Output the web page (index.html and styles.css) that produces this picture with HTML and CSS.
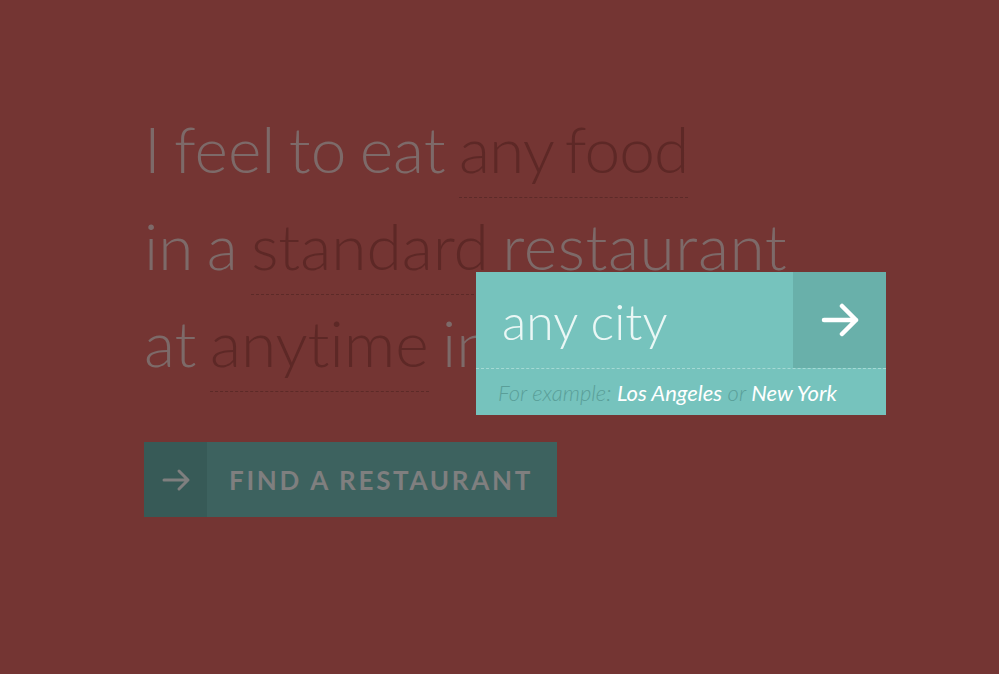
FILE: index.html
```html
<!DOCTYPE html>
<html>
<head>
<meta charset="utf-8">
<link rel="stylesheet" href="styles.css">
</head>
<body>
<div class="page">
  <div class="sentence">
    <div class="line">I feel to eat <span class="pick pick-tight">any food</span></div>
    <div class="line">in a <span class="pick">standard</span> <span class="wide">restaurant</span></div>
    <div class="line">at <span class="pick">anytime</span> in</div>
  </div>
  <div class="find">
    <span class="find-icon">
      <svg width="30" height="24" viewBox="0 0 30 24"><path d="M3 12 H27 M18 3 L27 12 L18 21" fill="none" stroke="#7f7f7f" stroke-width="3" stroke-linecap="round" stroke-linejoin="round"/></svg>
    </span>
    <span class="find-label">FIND A RESTAURANT</span>
  </div>
</div>
<div class="popup">
  <div class="popup-row">
    <div class="popup-input">any city</div>
    <div class="popup-go">
      <svg width="40" height="34" viewBox="0 0 40 34"><path d="M4 17 H36 M22 3 L36 17 L22 31" fill="none" stroke="#ffffff" stroke-width="4.5" stroke-linecap="round" stroke-linejoin="round"/></svg>
    </div>
  </div>
  <div class="popup-hint">For example: <span class="ex">Los Angeles</span> or <span class="ex">New York</span></div>
</div>
</body>
</html>
```
FILE: styles.css
```css
html, body {
  margin: 0;
  padding: 0;
}
body {
  background: #743533;
  width: 999px;
  height: 674px;
  overflow: hidden;
  font-family: Lato, "Open Sans", sans-serif;
  font-variant-ligatures: none;
}
.page {
  padding: 100px 0 0 144px;
}
.sentence {
  font-weight: 300;
  font-size: 64px;
  word-spacing: -4px;
  color: #7d6a69;
}
.line {
  height: 97px;
  line-height: 97px;
  white-space: nowrap;
}
.pick {
  color: #5d2826;
  padding-bottom: 10px;
  border-bottom: 1px dashed #5c2a28;
}
.pick-tight {
  letter-spacing: -0.9px;
}
.wide {
  letter-spacing: 0.6px;
}
.find {
  margin-top: 51px;
  width: 413px;
  height: 75px;
  display: flex;
  background: #3d625f;
}
.find-icon {
  width: 63px;
  background: #375a57;
  display: flex;
  align-items: center;
  justify-content: center;
}
.find-label {
  padding-left: 22px;
  display: flex;
  align-items: center;
  font-weight: 700;
  font-size: 26px;
  letter-spacing: 2.7px;
  color: #7f7f7f;
}
.popup {
  position: absolute;
  left: 476px;
  top: 272px;
  width: 410px;
  background: #76c3bd;
}
.popup-row {
  display: flex;
  height: 96px;
  border-bottom: 1px dashed #a6d9d4;
}
.popup-input {
  flex: 1;
  padding: 3px 0 0 26px;
  font-weight: 300;
  font-size: 50px;
  line-height: 93px;
  color: #eaf7f5;
}
.popup-go {
  width: 93px;
  background: #69b0aa;
  display: flex;
  align-items: center;
  justify-content: center;
}
.popup-hint {
  height: 46px;
  padding: 1px 0 0 22px;
  box-sizing: border-box;
  font-style: italic;
  font-weight: 300;
  font-size: 22px;
  line-height: 46px;
  color: #5a9f99;
}
.ex {
  font-weight: 400;
  color: #ffffff;
}
```
